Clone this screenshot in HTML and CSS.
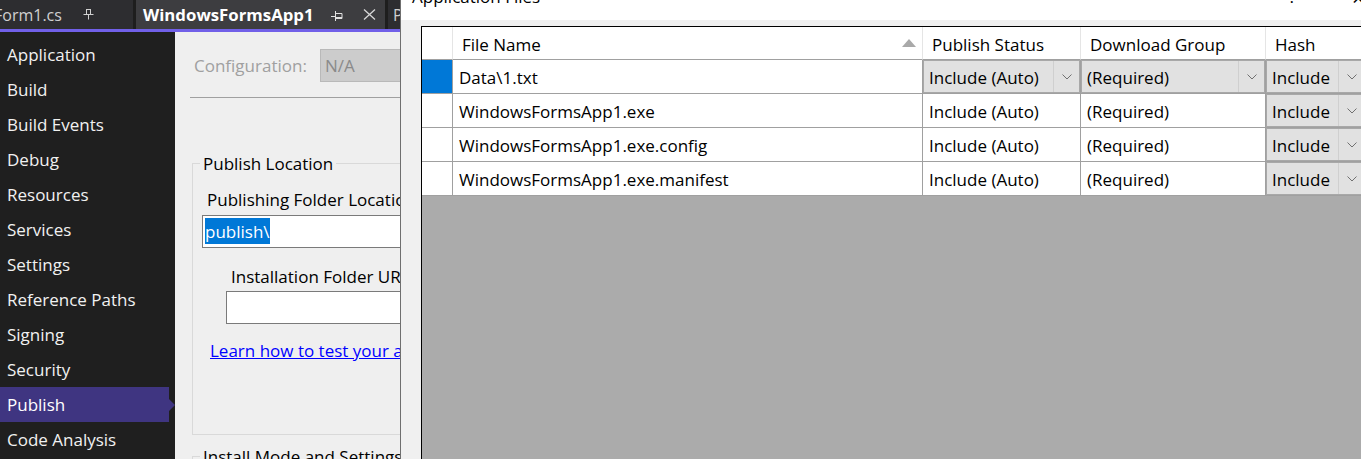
FILE: index.html
```html
<!DOCTYPE html>
<html lang="en">
<head>
  <meta charset="UTF-8">
  <title>WindowsFormsApp1 - Application Files</title>
  <link rel="stylesheet" href="styles.css">
</head>
<body>
  <div class="screen">
    <!-- IDE window -->
    <div class="ide">
      <div class="tabs">
        <div class="tab tab-form">
          <span>Form1.cs</span>
          <svg class="pin" width="11" height="11" viewBox="0 0 11 11">
            <path d="M3 0.5h5M3.5 0.5v5M7.5 0.5v5M0.5 5.5h10M5.5 5.5v5" stroke="#d0d0d0" fill="none"/>
          </svg>
        </div>
        <div class="tab tab-active">
          <span>WindowsFormsApp1</span>
          <svg class="pin-h" width="12" height="10" viewBox="0 0 12 10">
            <path d="M0 5.5h4M4.5 0v10M4.5 2.5h6.5v5h-6.5M4.5 6.5h6.5" stroke="#e0e0e0" fill="none"/>
          </svg>
          <svg class="close" width="13" height="11" viewBox="0 0 13 11">
            <path d="M1 0.5l11 10M12 0.5l-11 10" stroke="#d8d8d8" stroke-width="1.3" fill="none"/>
          </svg>
        </div>
        <div class="tab tab-next"><span>P</span></div>
      </div>

      <div class="ide-body">
        <div class="nav">
          <div class="nav-item">Application</div>
          <div class="nav-item">Build</div>
          <div class="nav-item">Build Events</div>
          <div class="nav-item">Debug</div>
          <div class="nav-item">Resources</div>
          <div class="nav-item">Services</div>
          <div class="nav-item">Settings</div>
          <div class="nav-item">Reference Paths</div>
          <div class="nav-item">Signing</div>
          <div class="nav-item">Security</div>
          <div class="nav-item active">Publish</div>
          <div class="nav-item">Code Analysis</div>
        </div>

        <div class="page">
          <div class="config-row">
            <span class="config-label">Configuration:</span>
            <div class="config-box">N/A</div>
          </div>
          <div class="rule"></div>

          <fieldset class="group">
            <legend>Publish Location</legend>
            <div class="field-label">Publishing Folder Location</div>
            <div class="input"><span class="sel">publish\</span></div>
            <div class="field-label indent">Installation Folder URL</div>
            <div class="input input-indent"></div>
            <a class="link" href="#">Learn how to test your application</a>
          </fieldset>

          <fieldset class="group group-2">
            <legend>Install Mode and Settings</legend>
          </fieldset>
        </div>
      </div>
    </div>

    <!-- Application Files dialog -->
    <div class="dialog">
      <div class="titlebar">
        <span class="title">Application Files</span>
        <span class="help">?</span>
        <span class="x">×</span>
      </div>
      <div class="grid">
        <table>
          <colgroup>
            <col style="width:31px">
            <col style="width:470px">
            <col style="width:158px">
            <col style="width:185px">
            <col style="width:150px">
          </colgroup>
          <thead>
            <tr>
              <th class="rh"></th>
              <th>
                <div class="th-sort">
                  <span>File Name</span>
                  <svg width="14" height="8" viewBox="0 0 14 8"><path d="M7 0L14 8H0z" fill="#a9a9a9"/></svg>
                </div>
              </th>
              <th>Publish Status</th>
              <th>Download Group</th>
              <th>Hash</th>
            </tr>
          </thead>
          <tbody>
            <tr>
              <td class="rh current"></td>
              <td>Data\1.txt</td>
              <td class="cmb"><div class="combo"><span>Include (Auto)</span><i class="drop"><svg width="10" height="6" viewBox="0 0 10 6"><path d="M0.5 0.5L5 5 9.5 0.5" stroke="#707070" fill="none"/></svg></i></div></td>
              <td class="cmb"><div class="combo"><span>(Required)</span><i class="drop"><svg width="10" height="6" viewBox="0 0 10 6"><path d="M0.5 0.5L5 5 9.5 0.5" stroke="#707070" fill="none"/></svg></i></div></td>
              <td class="cmb"><div class="combo combo-hash"><span>Include</span><i class="drop"><svg width="10" height="6" viewBox="0 0 10 6"><path d="M0.5 0.5L5 5 9.5 0.5" stroke="#707070" fill="none"/></svg></i></div></td>
            </tr>
            <tr>
              <td class="rh"></td>
              <td>WindowsFormsApp1.exe</td>
              <td>Include (Auto)</td>
              <td>(Required)</td>
              <td class="cmb"><div class="combo combo-hash"><span>Include</span><i class="drop"><svg width="10" height="6" viewBox="0 0 10 6"><path d="M0.5 0.5L5 5 9.5 0.5" stroke="#707070" fill="none"/></svg></i></div></td>
            </tr>
            <tr>
              <td class="rh"></td>
              <td>WindowsFormsApp1.exe.config</td>
              <td>Include (Auto)</td>
              <td>(Required)</td>
              <td class="cmb"><div class="combo combo-hash"><span>Include</span><i class="drop"><svg width="10" height="6" viewBox="0 0 10 6"><path d="M0.5 0.5L5 5 9.5 0.5" stroke="#707070" fill="none"/></svg></i></div></td>
            </tr>
            <tr>
              <td class="rh"></td>
              <td>WindowsFormsApp1.exe.manifest</td>
              <td>Include (Auto)</td>
              <td>(Required)</td>
              <td class="cmb"><div class="combo combo-hash"><span>Include</span><i class="drop"><svg width="10" height="6" viewBox="0 0 10 6"><path d="M0.5 0.5L5 5 9.5 0.5" stroke="#707070" fill="none"/></svg></i></div></td>
            </tr>
          </tbody>
        </table>
      </div>
    </div>
  </div>
</body>
</html>
```

FILE: styles.css
```css
* { box-sizing: border-box; }
body {
  margin: 0;
  font-family: "Open Sans", "Noto Sans", sans-serif;
  font-size: 17px;
  background: #f0f0f0;
  color: #000;
  overflow: hidden;
}
.screen {
  display: flex;
  width: 1361px;
  height: 459px;
  overflow: hidden;
}
/* IDE */
.ide {
  width: 400px;
  flex: none;
  display: flex;
  flex-direction: column;
  background: #1f1f1f;
  overflow: hidden;
}
.tabs {
  height: 32px;
  flex: none;
  display: flex;
  background: #1e1e1e;
  border-bottom: 3px solid #7160e8;
}
.tab {
  flex: none;
  height: 29px;
  display: flex;
  align-items: center;
  background: #2d2d30;
  color: #d0d0d0;
  font-size: 16px;
  white-space: nowrap;
}
.tab-form {
  width: 147px;
  margin-left: -14px;
  padding-left: 8px;
}
.tab-form .pin { margin-left: 21px; }
.tab-active {
  width: 249px;
  margin-left: 3px;
  padding-left: 7px;
  background: #3d3d40;
  color: #fff;
  font-size: 16.8px;
  font-weight: bold;
}
.tab-active .pin-h { margin-left: 17px; margin-top: 2px; }
.tab-active .close { margin-left: 20px; }
.tab-next {
  width: 40px;
  margin-left: 3px;
  padding-left: 5px;
}
.ide-body {
  flex: 1;
  display: flex;
  min-height: 0;
}
.nav {
  width: 175px;
  flex: none;
  padding-top: 5px;
  background: #1f1f1f;
}
.nav-item {
  height: 35px;
  line-height: 36px;
  padding-left: 7px;
  color: #f1f1f1;
  white-space: nowrap;
}
.nav-item.active {
  background: #3f3581;
  color: #fff;
  clip-path: polygon(0 0, 169px 0, 169px 12px, 175px 18px, 169px 24px, 169px 100%, 0 100%);
}
.page {
  flex: 1;
  background: #efefef;
  padding-left: 15px;
  overflow: hidden;
  white-space: nowrap;
}
.config-row {
  margin-top: 17px;
  height: 33px;
  display: flex;
  align-items: center;
}
.config-label {
  width: 130px;
  padding-left: 4px;
  color: #a0a0a0;
  flex: none;
}
.config-box {
  width: 120px;
  height: 33px;
  flex: none;
  line-height: 32px;
  padding-left: 4px;
  background: #cccccc;
  border: 1px solid #b9b9b9;
  color: #8a8a8a;
}
.rule {
  margin-top: 15px;
  height: 1px;
  background: #a0a0a0;
  width: 260px;
}
.group {
  margin: 55px 0 0 2px;
  padding: 0 0 72px 9px;
  width: 260px;
  border: 1px solid #d9d9d9;
}
.group legend {
  margin-left: -2px;
  padding: 0 3px;
  line-height: 21px;
}
.group-2 {
  margin-top: 11px;
  padding-bottom: 40px;
}
.field-label {
  margin-top: 15px;
  padding-left: 5px;
  line-height: 22px;
}
.field-label.indent {
  margin-top: 18px;
  padding-left: 29px;
}
.input {
  margin-top: 4px;
  width: 260px;
  height: 33px;
  padding: 2px;
  background: #fff;
  border: 1px solid #7a7a7a;
}
.input-indent {
  margin-top: 3px;
  margin-left: 24px;
}
.sel {
  display: inline-block;
  height: 26px;
  line-height: 27px;
  background: #0078d7;
  color: #fff;
}
.link {
  display: block;
  margin: 16px 0 0 8px;
  line-height: 22px;
  color: #0000ff;
}
/* dialog */
.dialog {
  flex: 1;
  display: flex;
  flex-direction: column;
  background: #f0f0f0;
  border-left: 1px solid #6f6f6f;
  overflow: hidden;
}
.titlebar {
  height: 20px;
  flex: none;
  display: flex;
  background: #fff;
  overflow: hidden;
  padding-left: 11px;
  white-space: nowrap;
}
.titlebar span {
  line-height: 20px;
  margin-top: -13px;
}
.title { flex: 1; }
.help { margin-right: 56px; }
.x { width: 9px; font-size: 22px; }
.grid {
  flex: 1;
  margin: 6px 0 0 20px;
  border-left: 1px solid #000;
  border-top: 1px solid #000;
  background: #ababab;
  overflow: hidden;
}
table {
  border-collapse: separate;
  border-spacing: 0;
  table-layout: fixed;
  width: 994px;
}
th {
  height: 33px;
  padding: 2px 0 0 9px;
  text-align: left;
  font-weight: normal;
  background: #fff;
  border-right: 1px solid #e5e5e5;
  border-bottom: 1px solid #a0a0a0;
  white-space: nowrap;
}
.th-sort {
  display: flex;
  align-items: center;
  justify-content: space-between;
  padding-right: 6px;
}
.th-sort svg { margin-top: -2px; }
td {
  height: 34px;
  padding: 1px 0 0 6px;
  background: #fff;
  border-right: 1px solid #a0a0a0;
  border-bottom: 1px solid #a0a0a0;
  white-space: nowrap;
  overflow: hidden;
}
td.rh, th.rh { padding: 0; }
td.current { background: #0078d7; }
td.cmb {
  padding: 0;
  background: #e1e1e1;
}
.combo {
  height: 33px;
  display: flex;
  align-items: center;
  border: 1px solid #a8a8a8;
}
.combo span {
  flex: 1;
  padding: 1px 0 0 5px;
}
.drop {
  width: 26px;
  height: 100%;
  flex: none;
  display: flex;
  align-items: center;
  justify-content: center;
  border-left: 1px solid #cfcfcf;
}
.combo-hash .drop { margin-right: 50px; }
```
